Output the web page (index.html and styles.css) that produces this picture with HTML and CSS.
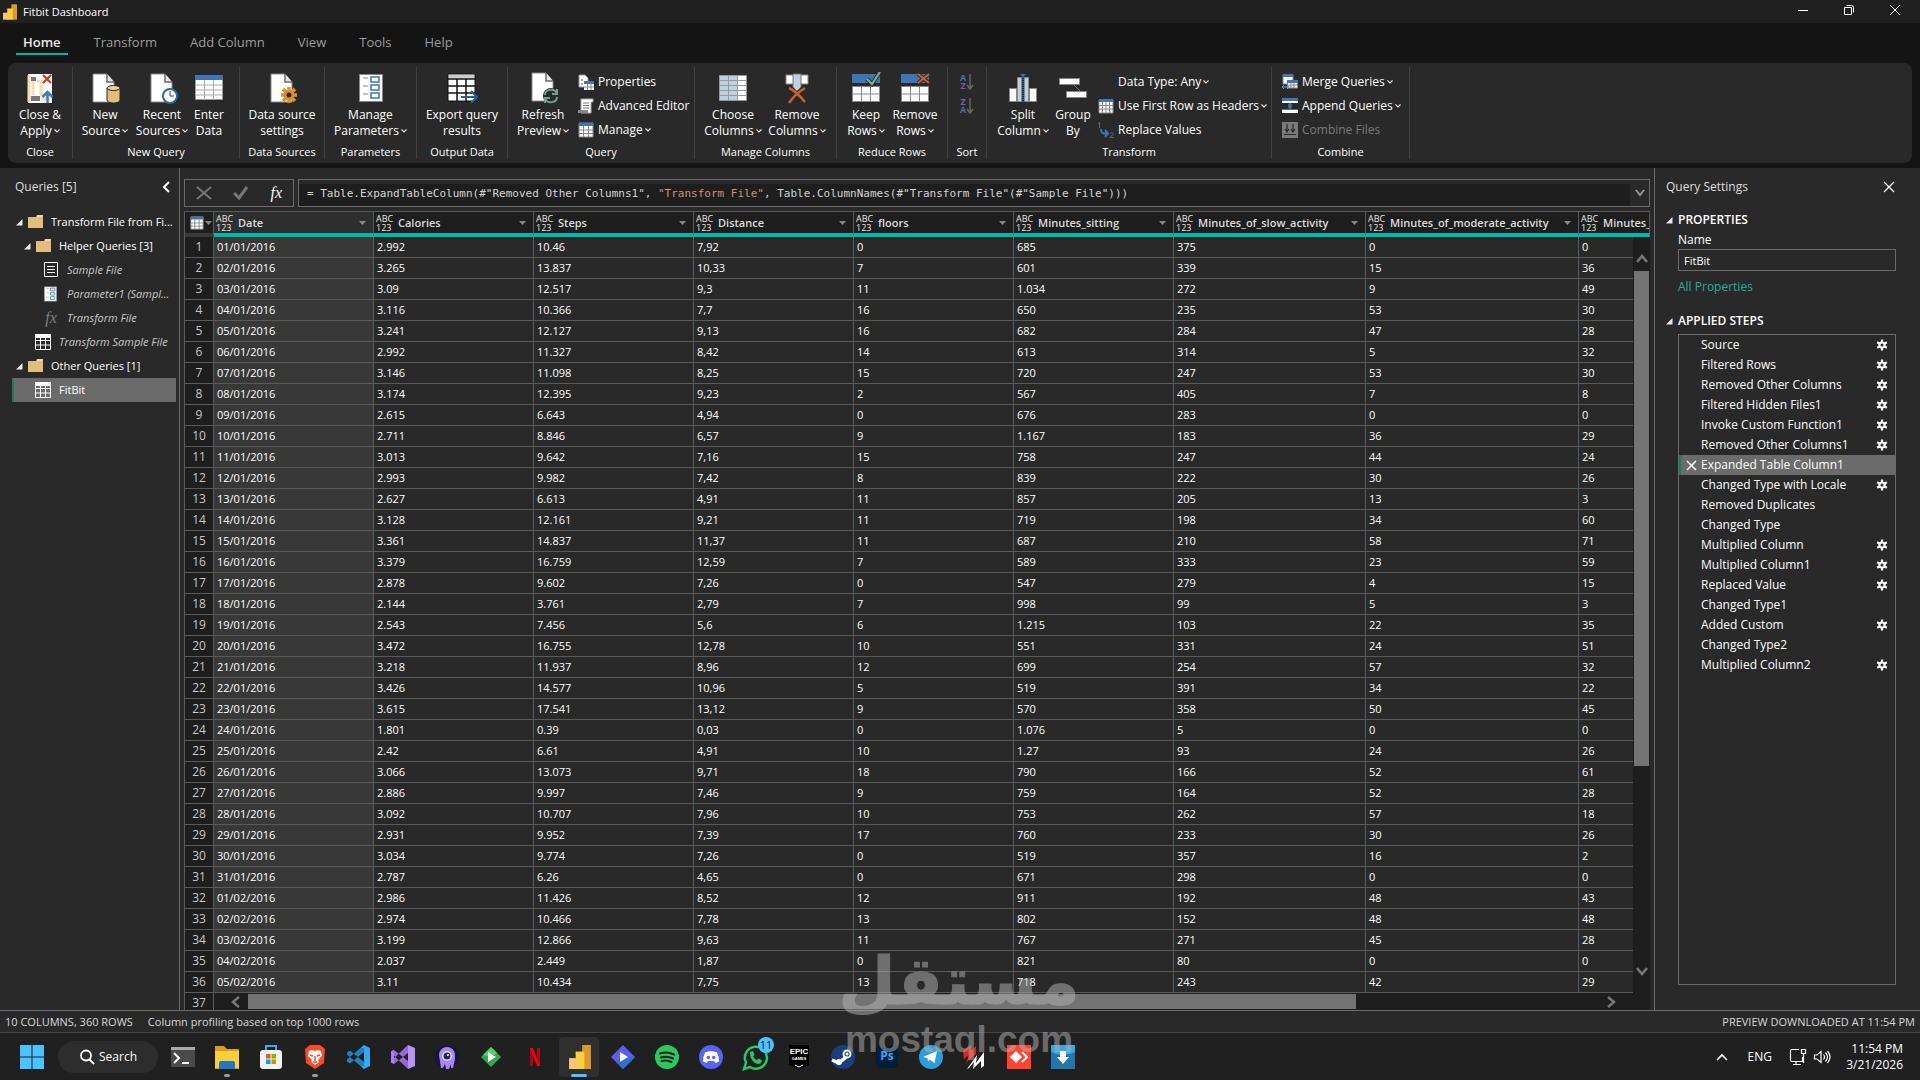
FILE: index.html
```html
<!DOCTYPE html>
<html lang="en">
<head>
<meta charset="utf-8">
<title>Fitbit Dashboard</title>
<link rel="stylesheet" href="styles.css">
</head>
<body>
<svg class="defs" aria-hidden="true">
  <symbol id="chev" viewBox="0 0 6 4"><path d="M.5 .5 3 3 5.500 .5" fill="none" stroke="currentColor" stroke-width="1.100"/></symbol>
  <symbol id="page" viewBox="0 0 32 32"><path d="M5 2h14l7 8v20H5z" fill="#fff" stroke="#8a8a8a"/><path d="M19 2v8h7" fill="#e8e8e8" stroke="#6a6a6a" stroke-width="1.500"/></symbol>
  <symbol id="gear" viewBox="0 0 12 12"><g stroke="#fff" stroke-width="2.200"><path d="M6 .5v11M1.200 3.200l9.600 5.600M10.800 3.200 1.200 8.800"/></g><circle cx="6" cy="6" r="3.600" fill="#fff"/><circle cx="6" cy="6" r="1.500" fill="#292929"/></symbol>
  <symbol id="folder" viewBox="0 0 16 14"><path d="M1 2h8l1-2h6v13H1z" fill="#e3bd7e"/><path d="M10 1h5" stroke="#fff3d8"/></symbol>
  <symbol id="tri" viewBox="0 0 7 7"><path d="M6.500 0v6.500H0z" fill="#e8e8e8"/></symbol>
  <symbol id="table" viewBox="0 0 16 16"><path d="M.5.5h15v15H.5zM0 2.500h16M0 6.500h16M0 11h16M5.500 3v13M10.500 3v13" fill="none" stroke="#fff"/><path d="M0 0h16v4H0z" fill="#fff"/></symbol>
  <symbol id="bluetable" viewBox="0 0 16 16"><path d="M1 1h14v14H1z" fill="#fff" stroke="#888"/><path d="M1 1h14v3H1z" fill="#3f74b5"/><path d="M1 8h14M1 11.500h14M5.500 4v11M10.500 4v11" stroke="#888"/></symbol>
  <symbol id="param" viewBox="0 0 24 30"><path d="M.5 1.500h23v27H.5z" fill="#fff" stroke="#888"/><path d="M4 5h5M4 13h5M4 21h5" stroke="#888"/><path d="M12 4h8v5h-8zM12 12h8v5h-8zM12 20h8v5h-8z" fill="#fff" stroke="#3f74b5" stroke-width="1.500"/></symbol>
  <symbol id="pbi" viewBox="0 0 20 22"><path d="M12 0h8v22h-8z" fill="#dc9a2c"/><path d="M6 6h8v16H6z" fill="#fbcf3c"/><path d="M0 12h8v10H0z" fill="#f7c873"/></symbol>
  <symbol id="scroll-up" viewBox="0 0 12 9"><path d="M1 8 6 2l5 6" fill="none" stroke="#777" stroke-width="2.500"/></symbol>
</svg>

<header class="titlebar">
  <svg class="app-icon"><use href="#pbi"/></svg>
  <h1>Fitbit Dashboard</h1>
  <div class="window-controls">
    <button aria-label="Minimize"><svg width="12" height="12"><path d="M1 6.500h10" stroke="#fff"/></svg></button>
    <button aria-label="Restore"><svg width="12" height="12"><path d="M1.500 3.500h7v7h-7zM3.500 1.500h5a2 2 0 0 1 2 2v5" fill="none" stroke="#fff"/></svg></button>
    <button aria-label="Close"><svg width="12" height="12"><path d="M1 1l10 10M11 1 1 11" stroke="#fff"/></svg></button>
  </div>
</header>

<nav class="tabs">
  <a href="#home" class="active">Home</a><a href="#transform">Transform</a><a href="#add">Add Column</a><a href="#view">View</a><a href="#tools">Tools</a><a href="#help">Help</a>
</nav>

<section class="ribbon" aria-label="Ribbon">
  <div class="group g-close"><div class="tools">
    <button class="big w-full"><svg viewBox="0 0 32 32"><path d="M4 2h24v29H4z" fill="#fff"/><path d="M5 3v27M9 7v16M13 9h4v14h8v4h-8" stroke="#f6dfb4" stroke-width="3" fill="none"/><path d="M7 5h5v4H7zM7 24h9v5H7z" fill="#777"/><path d="m19 3 8 8m0-8-8 8" stroke="#d03a1c" stroke-width="2.200"/><path d="M23.500 31V20m-5 5 5-5 5 5" stroke="#3f7cc0" stroke-width="2.500" fill="none"/></svg><span>Close &amp;<br>Apply<svg class="chev"><use href="#chev"/></svg></span></button>
  </div><h2>Close</h2></div>

  <div class="group g-new"><div class="tools">
    <button class="big w-64"><svg viewBox="0 0 32 32"><use href="#page" x="-1"/><path d="M18 16v12c0 4 13 4 13 0V16" fill="#e3bd7e" stroke="#292929"/><ellipse cx="24.500" cy="16" rx="6.500" ry="2.500" fill="#f0d097" stroke="#292929"/></svg><span>New<br>Source<svg class="chev"><use href="#chev"/></svg></span></button>
    <button class="big w-50"><svg viewBox="0 0 32 32"><use href="#page"/><circle cx="24" cy="24" r="7" fill="#fff" stroke="#2d6a94" stroke-width="2"/><path d="M24 19v5h4" fill="none" stroke="#444"/></svg><span>Recent<br>Sources<svg class="chev"><use href="#chev"/></svg></span></button>
    <button class="big w-44"><svg viewBox="0 0 32 32"><path d="M2.500 3.500h27v24h-27z" fill="#fff" stroke="#999"/><path d="M2 3h28v5H2z" fill="#3f74b5"/><path d="M2 13h28M2 18h28M2 23h28M11.500 8v20M20.500 8v20" stroke="#aaa"/></svg><span>Enter<br>Data</span></button>
  </div><h2>New Query</h2></div>

  <div class="group g-source"><div class="tools">
    <button class="big w-full"><svg viewBox="0 0 32 32"><use href="#page"/><g transform="translate(23 23)"><path d="M0-8V8M-8 0H8M-6-6 6 6M6-6-6 6" stroke="#dc922c" stroke-width="3.500"/><circle r="5.500" fill="#dc922c"/><circle r="2.500" fill="#292929"/></g></svg><span>Data source<br>settings</span></button>
  </div><h2>Data Sources</h2></div>

  <div class="group g-param"><div class="tools">
    <button class="big w-full"><svg viewBox="0 0 32 32"><use href="#param" x="4" y="1" width="24" height="30"/></svg><span>Manage<br>Parameters<svg class="chev"><use href="#chev"/></svg></span></button>
  </div><h2>Parameters</h2></div>

  <div class="group g-output"><div class="tools">
    <button class="big w-full"><svg viewBox="0 0 32 32"><path d="M2 2h27v27H2z" fill="#fff" stroke="#111"/><path d="M3 3h25v3H3z" fill="#ccc"/><path d="M2 7h27M2 14h27M2 21h27M11 7v22M20 7v22" stroke="#111" stroke-width="1.500"/><path d="M15 25h15m-5-6 6 6-6 6" fill="none" stroke="#245f9c" stroke-width="2"/></svg><span>Export query<br>results</span></button>
  </div><h2>Output Data</h2></div>

  <div class="group g-query"><div class="tools">
    <button class="big w-70"><svg viewBox="0 0 32 32"><use href="#page" y="-1"/><circle cx="24" cy="24" r="8" fill="#292929"/><path d="M18 23c0-6 9-7 12-2m0-4v5h-5M30 25c0 6-9 7-12 2m0 4v-5h5" fill="none" stroke="#6fa08c" stroke-width="2"/></svg><span>Refresh<br>Preview<svg class="chev"><use href="#chev"/></svg></span></button>
    <div class="stack">
      <button class="small"><svg viewBox="0 0 16 16"><path d="M1 1h6l3 3v9H1z" fill="#fff" stroke="#999"/><path d="M3 6h2M3 10h2" stroke="#555"/><path d="M6 8h10v8H6z" fill="#fff"/><path d="M6 7h10v3H6z" fill="#3f74b5"/><path d="M6 13h10M9.500 10v6M13 10v6" stroke="#888"/></svg>Properties</button>
      <button class="small"><svg viewBox="0 0 16 16"><path d="M3 1h12v3h-2v11H3z" fill="#fff" stroke="#aaa"/><path d="M5 5h6M5 7.500h6M5 10h6" stroke="#777"/><path d="M0 12h10v3H0z" fill="#888"/></svg>Advanced Editor</button>
      <button class="small"><svg viewBox="0 0 16 16"><use href="#bluetable"/></svg>Manage<svg class="chev"><use href="#chev"/></svg></button>
    </div>
  </div><h2>Query</h2></div>

  <div class="group g-columns"><div class="tools">
    <button class="big w-74"><svg viewBox="0 0 32 32"><path d="M2.500 3.500h27v25h-27z" fill="#fff"/><path d="M3 4h18v24H3z" fill="#bcd2e2"/><path d="M2.500 3.500h27v25h-27zM2 8.500h28M2 13.500h28M2 18.500h28M2 23.500h28M11.500 3v25M20.500 3v25" fill="none" stroke="#999"/></svg><span>Choose<br>Columns<svg class="chev"><use href="#chev"/></svg></span></button>
    <button class="big w-54"><svg viewBox="0 0 32 32"><path d="M5 3h22v9H5z" fill="#fff" stroke="#888"/><path d="M12 2h8v13l-4 4-4-4z" fill="#bcd2e2" stroke="#777"/><path d="M8 16c5 2 11 8 16 14M24 16C19 19 12 25 8 31" fill="none" stroke="#d0602a" stroke-width="2.500"/></svg><span>Remove<br>Columns<svg class="chev"><use href="#chev"/></svg></span></button>
  </div><h2>Manage Columns</h2></div>

  <div class="group g-rows"><div class="tools">
    <button class="big w-58"><svg viewBox="0 0 32 32"><path d="M2 2h28v9H2z" fill="#3f74b5"/><path d="M2.500 14.500h27v15h-27zM2 22h28M11.500 14v16M20.500 14v16" fill="#fff" stroke="#888"/><path d="m17 7 5 5 8-12" fill="none" stroke="#292929" stroke-width="4"/><path d="m17 7 5 5 8-12" fill="none" stroke="#7bb09a" stroke-width="2.200"/></svg><span>Keep<br>Rows<svg class="chev"><use href="#chev"/></svg></span></button>
    <button class="big w-40"><svg viewBox="0 0 32 32"><path d="M2 2h28v9H2z" fill="#3f74b5"/><path d="M2.500 14.500h27v15h-27zM2 22h28M11.500 14v16M20.500 14v16" fill="#fff" stroke="#888"/><path d="m19 2 11 9M30 2 19 11" fill="none" stroke="#292929" stroke-width="4"/><path d="m19 2 11 9M30 2 19 11" fill="none" stroke="#d0602a" stroke-width="2"/></svg><span>Remove<br>Rows<svg class="chev"><use href="#chev"/></svg></span></button>
  </div><h2>Reduce Rows</h2></div>

  <div class="group g-sort"><div class="tools"><div class="stack">
    <button class="small sort" aria-label="Sort ascending"><span class="az"><b class="blue">A</b><b class="violet">Z</b></span><svg viewBox="0 0 8 16"><path d="M4 0v15M1 11l3 4 3-4" fill="none" stroke="#666" stroke-width="1.500"/></svg></button>
    <button class="small sort" aria-label="Sort descending"><span class="az"><b class="violet">Z</b><b class="blue">A</b></span><svg viewBox="0 0 8 16"><path d="M4 0v15M1 11l3 4 3-4" fill="none" stroke="#666" stroke-width="1.500"/></svg></button>
  </div></div><h2>Sort</h2></div>

  <div class="group g-transform"><div class="tools">
    <button class="big w-70"><svg viewBox="0 0 32 32"><path d="M2.500 16.500h7v13h-7zM22.500 16.500h7v13h-7z" fill="#fff" stroke="#888"/><path d="M10.500 5.500h4v24h-4zM17.500 5.500h4v24h-4z" fill="#bcd2e2" stroke="#888"/><path d="M13 2h6l-3 3z" fill="#3f74b5"/><path d="M16 5v25" stroke="#5d8fc4" stroke-dasharray="1 1"/></svg><span>Split<br>Column<svg class="chev"><use href="#chev"/></svg></span></button>
    <button class="big w-30"><svg viewBox="0 0 32 32"><path d="M16 12l8 8" stroke="#777"/><path d="M2.500 6.500h20v6h-20zM9.500 19.500h20v6h-20z" fill="#fff" stroke="#888"/></svg><span>Group<br>By</span></button>
    <div class="stack indent">
      <button class="small"><svg viewBox="0 0 16 16"></svg>Data Type: Any<svg class="chev"><use href="#chev"/></svg></button>
      <button class="small"><svg viewBox="0 0 16 16"><path d="M1 2h14v13H1z" fill="#fff" stroke="#888"/><path d="M1 7.500h14M1 11h14M4.500 4v11M8 4v11M11.500 4v11" stroke="#888"/><path d="M1 1h14v3H1z" fill="#3f74b5"/></svg>Use First Row as Headers<svg class="chev"><use href="#chev"/></svg></button>
      <button class="small"><svg viewBox="0 0 16 16"><path d="M0 1.500 1.500.5V6M12 11.500c3-2 4 0 2.500 1.500L12 15.500h4" fill="none" stroke="#666"/><path d="M3 7c0 4 2 5 6 4.500M7 8l3 3.500L7 15" fill="none" stroke="#3f74b5" stroke-width="2"/></svg>Replace Values</button>
    </div>
  </div><h2>Transform</h2></div>

  <div class="group g-combine"><div class="tools">
    <div class="stack indent">
      <button class="small"><svg viewBox="0 0 16 16"><path d="M1 1h10v9H1z" fill="#fff" stroke="#888"/><path d="M1 0h10v3H1z" fill="#3f74b5"/><path d="M5.500 7h10v7h-10zM9 9v5M12 9v5M5 11h10" fill="#fff" stroke="#888"/><path d="M5 6h11v3H5z" fill="#3f74b5"/><path d="M0 13h7m-5-2-2 2 2 2m3-4 2 2-2 2" fill="none" stroke="#6aa3d8"/></svg>Merge Queries<svg class="chev"><use href="#chev"/></svg></button>
      <button class="small"><svg viewBox="0 0 16 16"><path d="M0 3h16v2H0zM0 12h16v3H0z" fill="#fff"/><path d="M0 0h16v3H0zM0 11h16v1H0z" fill="#3f74b5"/><path d="M8 5v6M6 7h4M6 9h4" stroke="#3f74b5" stroke-width="1.500"/></svg>Append Queries<svg class="chev"><use href="#chev"/></svg></button>
      <button class="small" disabled><svg viewBox="0 0 16 16"><path d="M0 0h16v16H0z" fill="#7a7a7a"/><path d="M5 2v8M11 2v8M3 7l2 3 2-3m2 0 2 3 2-3M2 12.500h12" fill="none" stroke="#292929" stroke-width="1.200"/></svg>Combine Files</button>
    </div>
  </div><h2>Combine</h2></div>
</section>

<main class="workspace">
  <aside class="queries">
    <div class="panel-head"><h2>Queries [5]</h2><button aria-label="Collapse"><svg width="8" height="12"><path d="M7 1 2 6l5 5" fill="none" stroke="#fff" stroke-width="2"/></svg></button></div>
    <ul class="tree">
      <li class="l1"><svg class="tri"><use href="#tri"/></svg><svg class="ico"><use href="#folder"/></svg><span>Transform File from Fi...</span></li>
      <li class="l2"><svg class="tri"><use href="#tri"/></svg><svg class="ico"><use href="#folder"/></svg><span>Helper Queries [3]</span></li>
      <li class="l3 soft"><svg class="ico" viewBox="0 0 16 16"><path d="M1.500.5h13v14h-13z" fill="none" stroke="#fff"/><path d="M4 4.500h8M4 7.500h8M4 10.500h8" stroke="#fff"/></svg><span>Sample File</span></li>
      <li class="l3 soft"><svg class="ico" viewBox="0 0 16 16"><use href="#param" x="1" y="0" width="13" height="16"/></svg><span>Parameter1 (Sampl...</span></li>
      <li class="l3 soft"><i class="ico fx">fx</i><span>Transform File</span></li>
      <li class="l2 leaf soft"><svg class="ico"><use href="#table"/></svg><span>Transform Sample File</span></li>
      <li class="l1"><svg class="tri"><use href="#tri"/></svg><svg class="ico"><use href="#folder"/></svg><span>Other Queries [1]</span></li>
      <li class="l2 leaf selected"><svg class="ico"><use href="#table"/></svg><span>FitBit</span></li>
    </ul>
  </aside>

  <section class="editor">
    <div class="formula">
      <div class="formula-actions">
        <button aria-label="Cancel"><svg width="16" height="14"><path d="M1 1l14 12M15 1 1 13" stroke="#777" stroke-width="2"/></svg></button>
        <button aria-label="Commit"><svg width="16" height="14"><path d="m1 7 5 5 8-11" fill="none" stroke="#777" stroke-width="3"/></svg></button>
        <button aria-label="Function" class="fx">fx</button>
      </div>
      <div class="formula-box"><code>= Table.ExpandTableColumn(#"Removed Other Columns1", <em>"Transform File"</em>, Table.ColumnNames(#"Transform File"(#"Sample File")))</code><button aria-label="Expand"><svg width="10" height="8"><path d="m1 1 4 5 4-5" fill="none" stroke="#999" stroke-width="2"/></svg></button></div>
    </div>
    <div class="grid">
      <table>
        <colgroup><col class="c-num"><col class="c-std"><col class="c-std"><col class="c-std"><col class="c-std"><col class="c-std"><col class="c-std"><col class="c-slow"><col class="c-mod"><col class="c-last"></colgroup>
        <thead><tr id="head"></tr></thead>
        <tbody id="rows"></tbody>
      </table>
      <div class="vscroll"><svg width="12" height="9"><use href="#scroll-up"/></svg><div class="track"><div class="thumb"></div></div><svg class="flip" width="12" height="9"><use href="#scroll-up"/></svg></div>
      <div class="hscroll"><svg width="9" height="12"><path d="M8 1 2 6l6 5" fill="none" stroke="#777" stroke-width="2.500"/></svg><div class="track"><div class="thumb"></div></div><svg width="9" height="12"><path d="m1 1 6 5-6 5" fill="none" stroke="#777" stroke-width="2.500"/></svg></div>
    </div>
  </section>

  <aside class="settings">
    <div class="panel-head"><h2>Query Settings</h2><button aria-label="Close"><svg width="12" height="12"><path d="M1 1l10 10M11 1 1 11" stroke="#fff" stroke-width="1.300"/></svg></button></div>
    <h3><svg class="tri"><use href="#tri"/></svg>PROPERTIES</h3>
    <div class="props">
      <label for="qname">Name</label>
      <input id="qname" type="text" value="FitBit">
      <a href="#props">All Properties</a>
    </div>
    <h3><svg class="tri"><use href="#tri"/></svg>APPLIED STEPS</h3>
    <ol class="steps" id="steps"></ol>
  </aside>
</main>

<footer class="status"><span>10 COLUMNS, 360 ROWS</span><span>Column profiling based on top 1000 rows</span><span class="right">PREVIEW DOWNLOADED AT 11:54 PM</span></footer>

<div class="taskbar">
  <button class="task" aria-label="Start"><svg viewBox="0 0 28 28"><path d="M2 2h11.500v11.500H2zM14.500 2H26v11.500H14.500zM2 14.500h11.500V26H2zM14.500 14.500H26V26H14.500z" fill="#4cc2ff"/></svg></button>
  <button class="search"><svg width="16" height="16"><circle cx="7" cy="6.500" r="5" fill="none" stroke="#fff" stroke-width="1.800"/><path d="m10.500 10.500 4.500 4.500" stroke="#fff" stroke-width="1.800"/></svg>Search</button>
  <div class="apps">
  <button class="task" aria-label="Terminal"><svg viewBox="0 0 28 28"><rect x="2" y="4" width="24" height="20" rx="1" fill="#4a4a4a"/><path d="M2 4h24v3H2z" fill="#aaa"/><path d="m5 10 5 5-5 5M13 20h7" fill="none" stroke="#fff" stroke-width="2"/></svg></button>
  <button class="task running" aria-label="Explorer"><svg viewBox="0 0 28 28"><path d="M2 3h9l3 3h12v20H2z" fill="#d99a28"/><path d="M2 8h24v17H2z" fill="#fbcf3c"/><path d="M6 26v-6q0-2 2-2h12q2 0 2 2v6z" fill="#2277c4"/></svg></button>
  <button class="task" aria-label="Store"><svg viewBox="0 0 28 28"><path d="M9 9V3h10v6" fill="none" stroke="#3fa9ec" stroke-width="2"/><rect x="3" y="7" width="22" height="19" rx="3" fill="#f2f2f2"/><path d="M9 11h4.500v4.500H9z" fill="#f25022"/><path d="M14.500 11H19v4.500h-4.500z" fill="#7fba00"/><path d="M9 16.500h4.500V21H9z" fill="#00a4ef"/><path d="M14.500 16.500H19V21h-4.500z" fill="#d98b00"/></svg></button>
  <button class="task running" aria-label="Brave"><svg viewBox="0 0 28 28"><path d="M9 2h10l5 4-1 14-9 6-9-6L4 6z" fill="#fb4b25"/><path d="m8 8 3-1 3 1 3-1 3 1 1 5-4 4 1 2-4 3-4-3 1-2-4-4z" fill="#fff"/><path d="m9 12 3 1m7-1-3 1m-2 0v5m-2 1h4" stroke="#fb4b25" stroke-width="1.500"/></svg></button>
  <button class="task" aria-label="Visual Studio Code"><svg viewBox="0 0 28 28"><path d="M19 2v7L5 20.500 2 18.500v-2zM19 26v-7L5 7.500 2 9.500v2z" fill="#2180c0"/><path d="m19 2 6 3v18l-6 3-3-3h3V5h-3z" fill="#3aa6ee"/></svg></button>
  <button class="task" aria-label="Visual Studio"><svg viewBox="0 0 28 28"><path d="M19 2v8L5 21l-3-1.500V18zM19 26v-8L5 7 2 8.500V10z" fill="#9468d6"/><path d="M2 8.500 5 7v14l-3-1.500z" fill="#a97ff0"/><path d="m19 2 7 3v18l-7 3z" fill="#b893f2"/></svg></button>
  <button class="task" aria-label="Octopus"><svg viewBox="0 0 28 28"><circle cx="14" cy="14" r="12" fill="#14163c"/><path d="M6 12a8 8 0 0 1 16 0v4l-2 9h-2v-4l-2 5h-3l-1-5-2 4H8z" fill="#a987ee"/><circle cx="14" cy="13" r="5" fill="#e8e0ff"/><circle cx="14" cy="13" r="3.500" fill="#1f2a63"/><circle cx="15" cy="12" r="1" fill="#fff"/></svg></button>
  <button class="task" aria-label="Play games"><svg viewBox="0 0 28 28"><path d="m14 4 10 10-10 10L4 14z" fill="#2fa84f"/><path d="m14 4 6 6-6 4-8-2z" fill="#4fd06f"/><path d="m11 9 8 5-8 5z" fill="#fff"/></svg></button>
  <button class="task" aria-label="Netflix"><svg viewBox="0 0 28 28"><path d="M9 5h3v18H9zM16 5h3v18h-3z" fill="#b1060f"/><path d="M9 5h3l7 18h-3z" fill="#e50914"/></svg></button>
  <button class="task current" aria-label="Power BI"><svg viewBox="0 0 28 28"><use href="#pbi" x="4" y="2" width="22" height="24"/></svg></button>
  <button class="task" aria-label="Power Automate"><svg viewBox="0 0 28 28"><path d="m14 2 12 12-12 12L2 14z" fill="#5a5ff0"/><path d="m14 26 12-12-6-1-13 6z" fill="#2f6fd6"/><path d="m11 9 8 5-8 5z" fill="#fff"/></svg></button>
  <button class="task" aria-label="Spotify"><svg viewBox="0 0 28 28"><circle cx="14" cy="14" r="12" fill="#2bc95c"/><path d="M7 10.500q7-2.500 14 1M8 14.500q6-2 12 1M8.500 18q5-1.500 10 1" fill="none" stroke="#1c1c1c" stroke-width="2" stroke-linecap="round"/></svg></button>
  <button class="task" aria-label="Discord"><svg viewBox="0 0 28 28"><circle cx="14" cy="14" r="12" fill="#5865f2"/><path d="M8 9.500q6-2.500 12 0 2 4 2 9l-3.500 1.500-1.500-2h-6l-1.500 2L6 18.500q0-5 2-9z" fill="#fff"/><circle cx="11.300" cy="14.500" r="1.700" fill="#5865f2"/><circle cx="16.700" cy="14.500" r="1.700" fill="#5865f2"/></svg></button>
  <button class="task" aria-label="WhatsApp, 11 new"><svg viewBox="0 0 28 28"><path d="M3 26l2-6.500A11 11 0 1 1 9 24z" fill="none" stroke="#2ac862" stroke-width="2.500"/><path d="M9 9l3-1 1.500 4-1.500 1.500q1 2.500 4 3.500l2-1.500 3 2q-1 3.500-4 3.500Q9 19 9 9z" fill="#2ac862"/></svg><span class="badge">11</span></button>
  <button class="task" aria-label="Epic Games"><svg viewBox="0 0 28 28"><path d="M4 2h20v20l-10 4-10-4z" fill="#000"/><path d="m10 22 4 2 4-2" stroke="#fff" fill="none"/></svg><span class="epic">EPIC<small>GAMES</small></span></button>
  <button class="task" aria-label="Steam"><svg viewBox="0 0 28 28"><circle cx="14" cy="14" r="12" fill="#1b3f7c"/><path d="M3 17l7 3 7-6" fill="none" stroke="#fff" stroke-width="3.500"/><circle cx="18" cy="11" r="3.500" fill="#1b3f7c" stroke="#fff" stroke-width="2"/><circle cx="18" cy="11" r="1.500" fill="#fff"/><circle cx="10" cy="19" r="3" fill="#fff"/></svg></button>
  <button class="task" aria-label="Photoshop"><svg viewBox="0 0 28 28"><rect x="3" y="3" width="22" height="22" rx="4" fill="#001e36"/></svg><span class="ps">Ps</span></button>
  <button class="task" aria-label="Telegram"><svg viewBox="0 0 28 28"><circle cx="14" cy="14" r="12" fill="#2a9fdc"/><path d="m6 14 14-6-2.500 12-5-3.500-1.500 2-.5-3.500z" fill="#fff"/></svg></button>
  <button class="task" aria-label="Clip editor"><svg viewBox="0 0 28 28"><path d="M2 8l8-6v6l5-5v8L5 20l3-8-5 4z" fill="#e0241c"/><path d="m6 26 10-14-1 8 8-11v14l-3 2v-7l-8 8 1-7-5 6z" fill="#fff"/></svg></button>
  <button class="task" aria-label="AnyDesk"><svg viewBox="0 0 28 28"><path d="M2 2h24v24H2z" fill="#ff4530"/><path d="m11 8 6 6-6 6-6-6z" fill="#fff"/><path d="m17 9 5 5-5 5" stroke="#fff" stroke-width="2" fill="none"/></svg></button>
  <button class="task" aria-label="Downloader"><svg viewBox="0 0 28 28"><path d="M2 2h24v24H2z" fill="#2277ae"/><path d="M2 2h24v7q-12 6-24 0z" fill="#35a8e4"/><path d="M11 8h6v6h3l-6 7-6-7h3z" fill="#fff"/></svg></button>
  </div>
  <div class="tray">
    <svg width="12" height="8"><path d="m1 7 5-5 5 5" fill="none" stroke="#fff" stroke-width="1.600"/></svg>
    <span>ENG</span>
    <div class="net"><svg width="18" height="18"><path d="M10 1.500H3a1.500 1.500 0 0 0-1.500 1.500v9A1.500 1.500 0 0 0 3 13.500h10.500V9M7 14v3M4 16.500h8M12.500 1.500h4v4h-4zM14.500 6v9" fill="none" stroke="#fff" stroke-width="1.200"/></svg>
    <svg width="18" height="18"><path d="M1.500 7v4H4l4 3.500v-11L4 7zM10.500 6.500q2 2.500 0 5M12.500 4.500q4 4.500 0 9M14.500 3q5 6 0 12" fill="none" stroke="#fff" stroke-width="1.200"/></svg></div>
    <time>11:54 PM<br>3/21/2026</time>
  </div>
</div>

<div class="watermark"><span class="ar" lang="ar" dir="rtl">مستقل</span><span class="en">mostaql.com</span></div>
<script src="script.js"></script>
</body>
</html>
```
FILE: styles.css
```css
* { box-sizing: border-box; margin: 0; padding: 0; }
body {
  height: 100vh; display: flex; flex-direction: column; overflow: hidden;
  background: #141414; color: #fff;
  font: 12px/16px "Open Sans", "Noto Sans", sans-serif;
}
button { background: none; border: 0; color: inherit; font: inherit; }
h1, h2, h3 { font-weight: 400; }
ul, ol { list-style: none; }
svg { flex: none; display: block; }
.defs { position: absolute; width: 0; height: 0; }

.titlebar { height: 23px; flex: none; background: #202020; display: flex; align-items: center; padding-left: 3px; }
.titlebar h1 { font-size: 11px; margin-left: 6px; }
.app-icon { width: 14px; height: 16px; }
.window-controls { margin-left: auto; display: flex; height: 100%; padding-right: 2px; }
.window-controls button { width: 46px; display: flex; align-items: center; justify-content: center; padding-bottom: 3px; }

.tabs { height: 40px; flex: none; display: flex; padding: 8px 0 0 16px; gap: 19px; }
.tabs a { color: #9d9d9d; text-decoration: none; font-size: 13px; line-height: 22px; height: 24px; padding: 0 7px; }
.tabs .active { color: #e8e8e8; font-weight: 600; border-bottom: 2px solid #00b5a3; }

.ribbon { height: 100px; flex: none; margin: 0 8px; background: #292929; border-radius: 8px; display: flex; padding: 4px 0; }
.group { border-right: 1px solid #424242; display: flex; flex-direction: column; text-align: center; }
.group h2 { font-size: 11px; margin-top: auto; margin-bottom: -1px; }
.tools { display: flex; }
.g-close { width: 65px; } .g-new { width: 167px; } .g-source { width: 85px; } .g-param { width: 92px; }
.g-output { width: 91px; } .g-query { width: 187px; } .g-columns { width: 142px; } .g-rows { width: 111px; }
.g-sort { width: 39px; } .g-transform { width: 285px; } .g-combine { width: 138px; }
.g-columns .tools, .g-transform .tools { padding-left: 1px; }
.big { display: flex; flex-direction: column; align-items: center; white-space: nowrap; padding-top: 5px; }
.big > svg { width: 32px; height: 32px; }
.big span { margin-top: 3px; }
.w-full { width: 100%; } .w-30 { width: 30px; } .w-40 { width: 40px; } .w-44 { width: 44px; } .w-50 { width: 50px; }
.w-54 { width: 54px; } .w-58 { width: 58px; } .w-64 { width: 64px; } .w-70 { width: 70px; } .w-74 { width: 74px; }
.chev { display: inline-block; width: 6px; height: 4px; margin-left: 2px; vertical-align: 2px; }
.stack { display: flex; flex-direction: column; gap: 8px; padding-top: 7px; }
.indent { padding-left: 10px; }
.small { display: flex; align-items: center; height: 16px; white-space: nowrap; }
.small > svg:first-child { width: 16px; height: 16px; margin-right: 4px; }
.small:disabled { color: #7a7a7a; }
.sort { padding-left: 12px; }
.sort > svg { width: 8px; height: 16px; }
.az { display: flex; flex-direction: column; font-size: 9px; line-height: 8px; }
.blue { color: #3f74b5; } .violet { color: #7e57b8; }

.workspace { flex: 1; min-height: 0; display: flex; background: #292929; margin-top: 5px; }
.panel-head { display: flex; align-items: center; height: 38px; }
.panel-head h2 { font-size: 13px; color: #dedede; }
.panel-head button { margin-left: auto; }
.queries { width: 180px; flex: none; border-right: 1px solid #6b6b6b; }
.queries .panel-head { padding: 0 9px 0 15px; }
.queries .panel-head h2 { font-size: 12px; }
.settings .panel-head h2 { font-size: 12px; }
.tree { padding: 4px 3px 0 12px; font-size: 11px; }
.tree li { height: 24px; display: flex; align-items: center; }
.tree span { white-space: nowrap; }
.tri { width: 7px; height: 7px; }
.tree .tri { margin-right: 4px; }
.tree .ico { width: 16px; height: 16px; margin-right: 8px; flex: none; }
.l1 { padding-left: 4px; } .l2 { padding-left: 12px; } .l3 { padding-left: 31px; } .l2.leaf { padding-left: 23px; }
.soft { font-style: italic; color: #c8c8c8; }
.fx { font: italic 16px/16px "Liberation Serif", serif; }
.ico.fx { color: #808080; text-align: center; }
.selected { background: #6b6b6b; box-shadow: inset 2px 0 #1f7a57; }

.editor { flex: 1; min-width: 0; padding: 11px 4px 0; display: flex; flex-direction: column; }
.formula { display: flex; gap: 4px; height: 28px; flex: none; }
.formula-actions { width: 110px; border: 1px solid #6b6b6b; display: flex; align-items: center; justify-content: space-between; padding: 0 11px; }
.formula-box { flex: 1; border: 1px solid #6b6b6b; display: flex; align-items: stretch; padding-top: 4px; }
.formula-box code { flex: 1; background: #1e1e1e; color: #d4d4d4; font: 11px/19px "DejaVu Sans Mono", monospace; padding-left: 8px; white-space: pre; overflow: hidden; }
.formula-box em { color: #ce9178; font-style: normal; }
.formula-box button { width: 19px; display: flex; align-items: center; justify-content: center; padding-bottom: 4px; }

.grid { flex: 1; min-height: 0; margin-top: 4px; position: relative; overflow: hidden; border-left: 1px solid #5a5a5a; }
table { table-layout: fixed; border-collapse: separate; border-spacing: 0; width: 100%; font-size: 11px; line-height: 16px; }
.c-num { width: 29px; } .c-std { width: 160px; } .c-slow { width: 192px; } .c-mod { width: 213px; }
th, td { text-align: left; white-space: nowrap; border-right: 1px solid #5a5a5a; overflow: hidden; }
thead th { height: 26px; background: #1e1e1e; border-top: 1px solid #5a5a5a; border-bottom: 4px solid #01b8aa; font-weight: 600; color: #dcdcdc; }
thead th:first-child { border-bottom-color: #3a3a3a; }
thead th:nth-child(2) { background: #2d2f2f; }
.hcell { display: flex; align-items: center; height: 21px; padding: 0 7px 0 2px; }
.hcell svg { margin-left: auto; }
.type { display: flex; flex-direction: column; width: 17px; flex: none; margin-right: 5px; font: 400 9px/9px "Open Sans", sans-serif; color: #e8e8e8; }
.corner { display: flex; align-items: center; padding-left: 5px; gap: 1px; }
tbody td, tbody th { height: 21px; padding: 0 3px; border-bottom: 1px solid #5a5a5a; font-weight: 500; }
tbody th { background: #1e1e1e; font-weight: 400; font-size: 12px; text-align: center; color: #c8c8c8; }
tbody td:nth-child(2) { background: #383838; }
.vscroll { position: absolute; right: 0; top: 26px; bottom: 0; width: 17px; background: #1e1e1e; display: flex; flex-direction: column; align-items: center; padding: 17px 0 34px; gap: 8px; }
.vscroll .track { flex: 1; width: 15px; }
.vscroll .thumb { height: 72%; background: #737373; }
.flip { transform: rotate(180deg); }
.hscroll { position: absolute; left: 29px; right: 17px; bottom: 0; height: 17px; background: #1e1e1e; display: flex; align-items: center; padding: 0 17px; gap: 8px; }
.hscroll .track { flex: 1; height: 15px; }
.hscroll .thumb { width: 82%; height: 100%; background: #737373; }

.settings { width: 266px; flex: none; border-left: 1px solid #6b6b6b; padding: 0 24px 25px 11px; display: flex; flex-direction: column; }
.settings .panel-head button { margin-right: 1px; }
.settings h3 { display: flex; align-items: center; gap: 5px; font-size: 12px; font-weight: 600; height: 20px; margin-top: 4px; }
.props { padding: 2px 0 12px 12px; display: flex; flex-direction: column; }
.props input { background: none; border: 1px solid #6b6b6b; height: 22px; color: #fff; font: inherit; font-size: 11px; padding: 0 5px; margin-top: 1px; }
.props a { color: #22b09a; text-decoration: none; margin-top: 8px; }
.steps { flex: 1; margin: 3px 0 0 12px; border: 1px solid #6b6b6b; }
.steps li { height: 20px; display: flex; align-items: center; padding: 0 7px 0 22px; white-space: nowrap; }
.steps li > svg:last-child { margin-left: auto; }
.steps .picked { background: #6b6b6b; box-shadow: inset 2px 0 #1f7a57; padding-left: 7px; }
.picked button { width: 15px; }

.status { height: 23px; flex: none; background: #292929; border-top: 1px solid #6b6b6b; border-bottom: 1px solid #454545; display: flex; align-items: center; gap: 15px; padding: 0 5px; font-size: 11px; color: #d8d8d8; }
.right { margin-left: auto; }

.taskbar { height: 47px; flex: none; background: #202020; display: flex; align-items: center; padding: 0 17px 0 10px; }
.task { width: 44px; height: 44px; display: flex; align-items: center; justify-content: center; position: relative; flex: none; }
.task svg { width: 28px; height: 28px; }
.search { width: 100px; height: 32px; border-radius: 16px; background: #2d2d2d; display: flex; align-items: center; justify-content: center; gap: 4px; margin: 0 3px 0 4px; }
.apps { display: flex; }
.running::after, .current::after { content: ""; position: absolute; bottom: 2px; width: 6px; height: 3px; border-radius: 2px; background: #9a9a9a; }
.current { background: #2f2f2f; box-shadow: inset 0 0 0 2px #202020; border-radius: 6px; }
.current::after { width: 16px; background: #4cc2ff; }
.badge { position: absolute; right: 3px; top: 2px; width: 16px; height: 16px; border-radius: 8px; background: #4cc2ff; color: #10202c; font-size: 11px; line-height: 16px; }
.epic { position: absolute; font: 700 8px/8px "Liberation Sans", sans-serif; top: 13px; }
.epic small { display: block; font-size: 4px; line-height: 5px; }
.ps { position: absolute; color: #31a8ff; font-weight: 700; top: 13px; }
.tray { margin-left: auto; display: flex; align-items: center; }
.tray > span { margin: 0 17px 0 20px; }
.net { display: flex; gap: 6px; margin-right: 6px; }
.tray time { text-align: right; width: 66px; }

.watermark { position: absolute; left: 843px; bottom: 20px; width: 232px; display: flex; flex-direction: column; align-items: center; color: #b4b4b4; opacity: .5; pointer-events: none; white-space: nowrap; }
.ar { font: 700 66px/76px "DejaVu Sans", sans-serif; -webkit-text-stroke: 1px #b4b4b4; }
.en { font: 700 37px/40px "Liberation Sans", sans-serif; }
```
FILE: script.js
```js
const columns = ["Date", "Calories", "Steps", "Distance", "floors", "Minutes_sitting", "Minutes_of_slow_activity", "Minutes_of_moderate_activity", "Minutes_"];
const data = `2.992 10.46 7,92 0 685 375 0 0
3.265 13.837 10,33 7 601 339 15 36
3.09 12.517 9,3 11 1.034 272 9 49
3.116 10.366 7,7 16 650 235 53 30
3.241 12.127 9,13 16 682 284 47 28
2.992 11.327 8,42 14 613 314 5 32
3.146 11.098 8,25 15 720 247 53 30
3.174 12.395 9,23 2 567 405 7 8
2.615 6.643 4,94 0 676 283 0 0
2.711 8.846 6,57 9 1.167 183 36 29
3.013 9.642 7,16 15 758 247 44 24
2.993 9.982 7,42 8 839 222 30 26
2.627 6.613 4,91 11 857 205 13 3
3.128 12.161 9,21 11 719 198 34 60
3.361 14.837 11,37 11 687 210 58 71
3.379 16.759 12,59 7 589 333 23 59
2.878 9.602 7,26 0 547 279 4 15
2.144 3.761 2,79 7 998 99 5 3
2.543 7.456 5,6 6 1.215 103 22 35
3.472 16.755 12,78 10 551 331 24 51
3.218 11.937 8,96 12 699 254 57 32
3.426 14.577 10,96 5 519 391 34 22
3.615 17.541 13,12 9 570 358 50 45
1.801 0.39 0,03 0 1.076 5 0 0
2.42 6.61 4,91 10 1.27 93 24 26
3.066 13.073 9,71 18 790 166 52 61
2.886 9.997 7,46 9 759 164 52 28
3.092 10.707 7,96 10 753 262 57 18
2.931 9.952 7,39 17 760 233 30 26
3.034 9.774 7,26 0 519 357 16 2
2.787 6.26 4,65 0 671 298 0 0
2.986 11.426 8,52 12 911 192 48 43
2.974 10.466 7,78 13 802 152 48 48
3.199 12.866 9,63 11 767 271 45 28
2.037 2.449 1,87 0 821 80 0 0
3.11 10.434 7,75 13 718 243 42 29`.split("\n");

const arrow = '<svg width="7" height="4"><path d="M0 0h7L3.500 4z" fill="#8a8a8a"/></svg>';
document.getElementById("head").innerHTML =
  '<th><div class="corner"><svg width="14" height="14"><use href="#bluetable"/></svg>' + arrow + "</div></th>" +
  columns.map((c, i) => `<th><div class="hcell"><span class="type"><span>ABC</span><span>123</span></span>${c}${i < columns.length - 1 ? arrow : ""}</div></th>`).join("");

const pad = n => String(n).padStart(2, "0");
document.getElementById("rows").innerHTML = data.map((line, i) => {
  const day = new Date(2016, 0, i + 1);
  const cells = [`${pad(day.getDate())}/${pad(day.getMonth() + 1)}/2016`, ...line.split(" ")];
  return `<tr><th>${i + 1}</th>${cells.map(c => `<td>${c}</td>`).join("")}</tr>`;
}).join("") + "<tr><th>37</th></tr>";

// A trailing * marks a step that has its own settings.
const steps = ["Source*", "Filtered Rows*", "Removed Other Columns*", "Filtered Hidden Files1*", "Invoke Custom Function1*", "Removed Other Columns1*", "Expanded Table Column1", "Changed Type with Locale*", "Removed Duplicates", "Changed Type", "Multiplied Column*", "Multiplied Column1*", "Replaced Value*", "Changed Type1", "Added Custom*", "Changed Type2", "Multiplied Column2*"];
document.getElementById("steps").innerHTML = steps.map(s => {
  const picked = s.startsWith("Expanded");
  const cross = '<button aria-label="Delete step"><svg width="11" height="11"><path d="M1 1l9 9M10 1 1 10" stroke="#fff" stroke-width="1.500"/></svg></button>';
  const gear = s.endsWith("*") ? '<svg width="12" height="12"><use href="#gear"/></svg>' : "";
  return `<li class="${picked ? "picked" : ""}">${picked ? cross : ""}<span>${s.replace("*", "")}</span>${gear}</li>`;
}).join("");
```
